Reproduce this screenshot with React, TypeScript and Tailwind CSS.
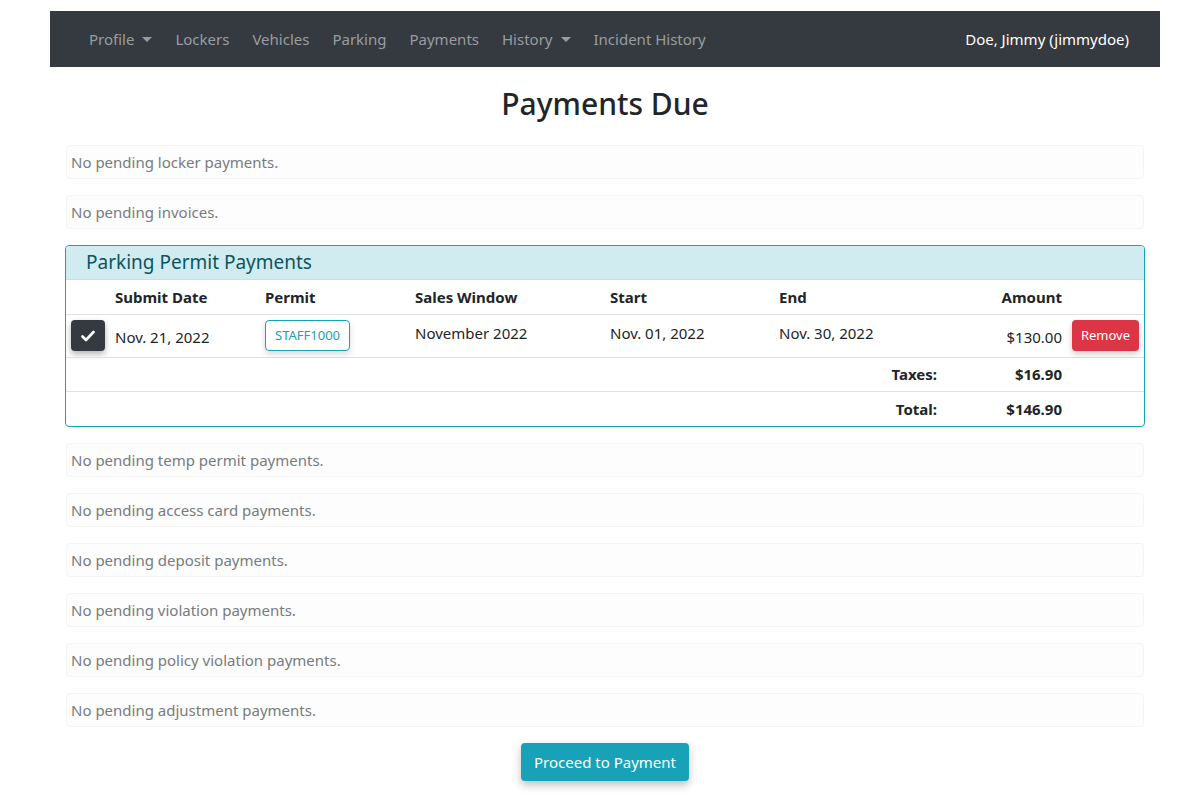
import React from "react";

const font = { fontFamily: '"Segoe UI", "Noto Sans", "Liberation Sans", sans-serif' };

const navItems = [
  { label: "Profile", caret: true },
  { label: "Lockers" },
  { label: "Vehicles" },
  { label: "Parking" },
  { label: "Payments" },
  { label: "History", caret: true },
  { label: "Incident History" },
];

const emptyBefore = ["No pending locker payments.", "No pending invoices."];
const emptyAfter = [
  "No pending temp permit payments.",
  "No pending access card payments.",
  "No pending deposit payments.",
  "No pending violation payments.",
  "No pending policy violation payments.",
  "No pending adjustment payments.",
];

function EmptyBox({ text }: { text: string }) {
  return (
    <div className="h-[34px] mx-px flex items-center px-[4px] border border-[#f4f4f4] rounded bg-[#fdfdfd] text-[15px] text-[#777b7e]">
      {text}
    </div>
  );
}

function Caret() {
  return <span className="inline-block ml-[8px] align-middle border-t-[5px] border-t-current border-x-[5px] border-x-transparent" />;
}

export default function App() {
  return (
    <div className="bg-white min-h-[797px] pt-[11px]" style={font}>
      <nav className="ml-[50px] mr-[40px] h-[56px] bg-[#343a40] flex items-center justify-between pl-[39px] pr-[31px]">
        <div className="flex items-center gap-[23px]">
          {navItems.map(item => (
            <span key={item.label} className="text-[15px] text-[#9a9da0] flex items-center">
              {item.label}
              {item.caret && <Caret />}
            </span>
          ))}
        </div>
        <span className="text-[15px] text-white">Doe, Jimmy (jimmydoe)</span>
      </nav>

      <main className="ml-[65px] mr-[55px] text-[#212529]">
        <h1 className="text-center text-[30px] font-medium leading-none pt-[22px] pb-[26px]">Payments Due</h1>

        <div className="flex flex-col gap-[16px]">
          {emptyBefore.map(t => (
            <EmptyBox key={t} text={t} />
          ))}

          <div className="border border-[#17a2b8] rounded overflow-hidden">
            <div className="h-[34px] bg-[#d1ecf1] border-b border-[#bee5eb] flex items-center pl-[20px] text-[19px] text-[#0c5460]">
              Parking Permit Payments
            </div>
            <table className="w-full text-[15px] border-collapse">
              <thead>
                <tr className="h-[34px] border-b border-[#dee2e6]">
                  <th className="w-[49px]" />
                  <th className="text-left font-bold w-[150px]">Submit Date</th>
                  <th className="text-left font-bold w-[150px]">Permit</th>
                  <th className="text-left font-bold w-[195px]">Sales Window</th>
                  <th className="text-left font-bold w-[169px]">Start</th>
                  <th className="text-left font-bold w-[170px]">End</th>
                  <th className="text-right font-bold">Amount</th>
                  <th className="w-[82px]" />
                </tr>
              </thead>
              <tbody>
                <tr className="h-[43px] border-b border-[#dee2e6]">
                  <td className="pl-[5px]">
                    <span className="w-[34px] h-[31px] rounded bg-[#343a40] flex items-center justify-center shadow-[0_3px_6px_rgba(0,0,0,0.3)]">
                      <svg width="14" height="12" viewBox="0 0 14 12">
                        <path d="M1.5 6.5 L5 10 L12.5 2" stroke="white" strokeWidth="2.6" fill="none" strokeLinecap="round" strokeLinejoin="round" />
                      </svg>
                    </span>
                  </td>
                  <td className="pt-[3px]">Nov. 21, 2022</td>
                  <td>
                    <span className="inline-flex items-center h-[31px] px-[9px] border border-[#17a2b8] rounded text-[13px] text-[#17a2b8] shadow-[0_3px_6px_rgba(0,0,0,0.15)]">
                      STAFF1000
                    </span>
                  </td>
                  <td className="align-top pt-[7px]">November 2022</td>
                  <td className="align-top pt-[7px]">Nov. 01, 2022</td>
                  <td className="align-top pt-[7px]">Nov. 30, 2022</td>
                  <td className="text-right pt-[3px]">$130.00</td>
                  <td className="pl-[10px] pr-[5px]">
                    <span className="inline-flex items-center justify-center w-[67px] h-[31px] rounded bg-[#dc3545] text-white text-[13px] shadow-[0_3px_6px_rgba(0,0,0,0.2)]">
                      Remove
                    </span>
                  </td>
                </tr>
                <tr className="h-[34px] border-b border-[#dee2e6] font-bold">
                  <td colSpan={5} />
                  <td className="text-right pr-[12px]">Taxes:</td>
                  <td className="text-right">$16.90</td>
                  <td />
                </tr>
                <tr className="h-[35px] font-bold">
                  <td colSpan={5} />
                  <td className="text-right pr-[12px]">Total:</td>
                  <td className="text-right">$146.90</td>
                  <td />
                </tr>
              </tbody>
            </table>
          </div>

          {emptyAfter.map(t => (
            <EmptyBox key={t} text={t} />
          ))}
        </div>

        <div className="flex justify-center pt-[16px]">
          <button className="h-[38px] px-[13px] rounded bg-[#17a2b8] text-white text-[15px] shadow-[0_4px_8px_rgba(0,0,0,0.25)]">
            Proceed to Payment
          </button>
        </div>
      </main>
    </div>
  );
}
